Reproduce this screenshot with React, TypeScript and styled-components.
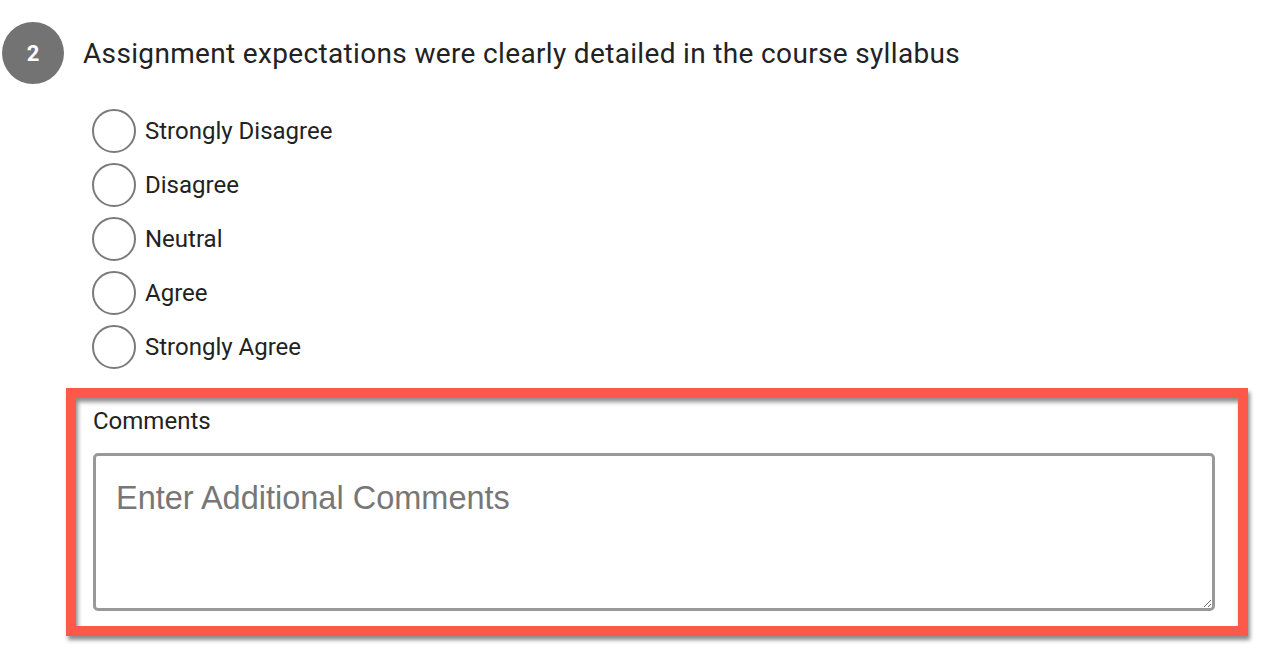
import React from "react";
import styled, { createGlobalStyle } from "styled-components";

const Global = createGlobalStyle`
  html, body { margin: 0; padding: 0; background: #ffffff; }
  body { font-family: Roboto, "Noto Sans", Arial, sans-serif; color: #222222; }
  * { box-sizing: border-box; }
`;

const Page = styled.div`
  display: flex;
  flex-direction: column;
  padding: 22px 0 0 2px;
  width: 1280px;
  height: 668px;
  overflow: hidden;
`;

const QuestionHeader = styled.div`
  display: flex;
  align-items: center;
  gap: 19px;
`;

const Badge = styled.div`
  width: 62px;
  height: 62px;
  border-radius: 50%;
  background: #737373;
  color: #ffffff;
  display: flex;
  align-items: center;
  justify-content: center;
  font-family: Roboto, Arial, sans-serif;
  font-weight: 700;
  font-size: 22px;
  flex-shrink: 0;
`;

const QuestionText = styled.h2`
  margin: 0;
  font-family: Roboto, Arial, sans-serif;
  font-weight: 400;
  font-size: 28px;
  color: #222222;
  letter-spacing: 0.34px;
`;

const Options = styled.div`
  display: flex;
  flex-direction: column;
  margin: 20px 0 0 90px;
`;

const OptionRow = styled.label`
  display: flex;
  align-items: center;
  height: 54px;
  gap: 9px;
  cursor: pointer;
`;

const RadioCircle = styled.span`
  width: 44px;
  height: 44px;
  border-radius: 50%;
  border: 2px solid #7a7a7a;
  background: #ffffff;
  flex-shrink: 0;
`;

const OptionLabel = styled.span`
  font-family: Roboto, Arial, sans-serif;
  font-size: 24px;
  color: #222222;
`;

const Highlight = styled.section`
  margin: 14px 0 0 64px;
  width: 1182px;
  height: 248px;
  border: 10px solid #fd594b;
  box-shadow: 2px 4px 4px rgba(0, 0, 0, 0.45), inset 2px 4px 4px rgba(0, 0, 0, 0.45);
  padding: 9px 23px 15px 17px;
  display: flex;
  flex-direction: column;
  background: #ffffff;
`;

const FieldLabel = styled.label`
  font-family: Roboto, Arial, sans-serif;
  font-size: 24px;
  color: #222222;
  line-height: 28px;
  margin-bottom: 18px;
`;

const CommentBox = styled.textarea`
  width: 1122px;
  height: 158px;
  border: 3px solid #999999;
  border-radius: 5px;
  padding: 24px 20px 20px;
  font-family: "Liberation Sans", Arial, sans-serif;
  font-size: 32.5px;
  color: #333333;
  resize: vertical;
  outline: none;
  &::placeholder {
    color: #777777;
  }
`;

const options = ["Strongly Disagree", "Disagree", "Neutral", "Agree", "Strongly Agree"];

export default function App() {
  return (
    <>
      <Global />
      <Page>
        <QuestionHeader>
          <Badge>2</Badge>
          <QuestionText>Assignment expectations were clearly detailed in the course syllabus</QuestionText>
        </QuestionHeader>
        <Options>
          {options.map((o) => (
            <OptionRow key={o}>
              <RadioCircle />
              <OptionLabel>{o}</OptionLabel>
            </OptionRow>
          ))}
        </Options>
        <Highlight>
          <FieldLabel>Comments</FieldLabel>
          <CommentBox placeholder="Enter Additional Comments" />
        </Highlight>
      </Page>
    </>
  );
}
